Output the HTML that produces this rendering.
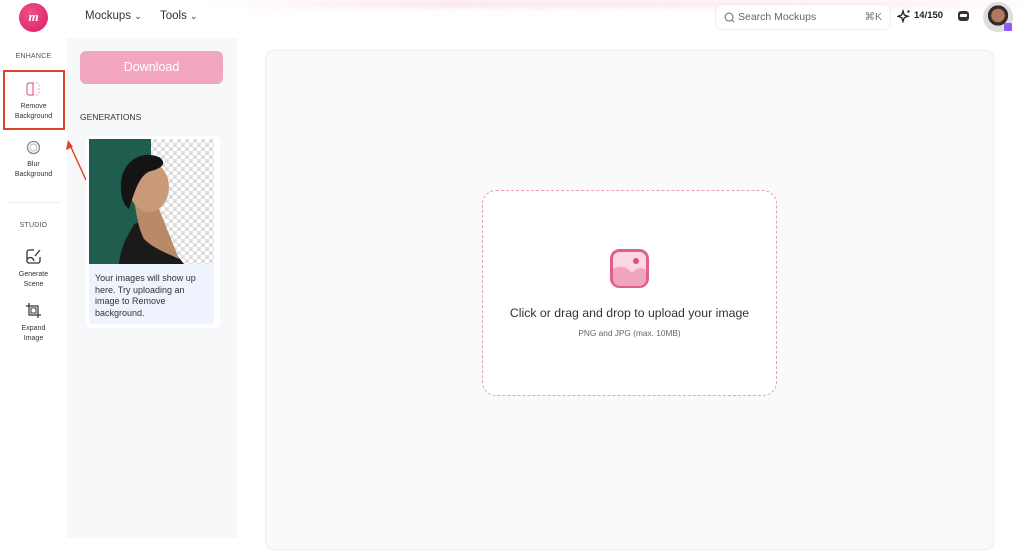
<!DOCTYPE html>
<html><head><meta charset="utf-8"><style>
*{box-sizing:border-box;margin:0;padding:0}
body{width:1024px;height:538px;overflow:hidden;background:#fff;font-family:"Liberation Sans",sans-serif;color:#333;position:relative}
.top{position:absolute;left:0;top:0;width:1024px;height:38px;background:#fff}
.top:before{content:"";position:absolute;left:200px;right:0;top:0;height:8px;background:linear-gradient(90deg,rgba(255,220,230,.0),rgba(253,215,228,.7) 30%,rgba(253,225,233,.6) 80%,rgba(255,240,244,.3));filter:blur(3px)}
.logo{position:absolute;left:19px;top:3px;width:29px;height:29px;border-radius:50%;background:radial-gradient(circle at 40% 35%,#f0508a,#d81e62);color:#fff;font:italic bold 13px "Liberation Serif",serif;text-align:center;line-height:28px}
.nav{position:absolute;top:10px;font-size:11.5px;color:#333}
.side{position:absolute;left:0;top:38px;width:67px;height:500px;background:#fff}
.panel{position:absolute;left:67px;top:38px;width:170px;height:500px;background:#f7f8fa}
.lab{position:absolute;font-size:7px;color:#555;text-align:center;width:67px;left:0;letter-spacing:.2px}
.item{position:absolute;left:0;width:67px;text-align:center;font-size:7px;line-height:10px;color:#333}
.card{position:absolute;left:265px;top:50px;width:729px;height:500px;background:#f9fafb;border:1px solid #eceef1;border-radius:8px}
.drop{position:absolute;left:482px;top:190px;width:295px;height:206px;background:#fff;border:1px dashed #e6a0b8;border-radius:14px}
</style></head><body>
<div class="top"></div>
<div class="logo">m</div>
<div class="nav" style="left:85px">Mockups <span style="font-size:9px">&#8964;</span></div>
<div class="nav" style="left:160px">Tools <span style="font-size:9px">&#8964;</span></div>
<div style="position:absolute;left:715px;top:4px;width:176px;height:26px;border:1px solid #eee;border-radius:7px;background:#fff;font-size:10.5px;color:#666">
<svg style="position:absolute;left:8px;top:7px" width="11" height="11" viewBox="0 0 12 12"><circle cx="5.5" cy="5.5" r="4.3" fill="none" stroke="#777" stroke-width="1.2"/><path d="M8.7 8.7L11 11" stroke="#777" stroke-width="1.2"/></svg>
<span style="position:absolute;left:22px;top:6px">Search Mockups</span>
<span style="position:absolute;right:8px;top:6px;color:#777">⌘K</span></div>
<svg style="position:absolute;left:897px;top:9px" width="14" height="14" viewBox="0 0 14 14"><path d="M6 2L7.3 6 11 7.3 7.3 8.6 6 12.5 4.7 8.6 1 7.3 4.7 6Z" fill="none" stroke="#222" stroke-width="1.3"/><circle cx="11.5" cy="2.5" r="1.2" fill="#222"/></svg>
<div style="position:absolute;left:914px;top:10px;font-size:9.5px;font-weight:bold;color:#222">14/150</div>
<div style="position:absolute;left:958px;top:11px;width:11px;height:10px;border-radius:3px;background:#333"><div style="margin:3px 2px;height:3px;background:#fff;border-radius:1px"></div></div>
<div style="position:absolute;left:983px;top:2px;width:30px;height:30px;border-radius:50%;background:radial-gradient(circle at 50% 45%,#b07a60 0 30%,#3a2a25 31% 45%,#ddd 46%)"></div>
<div style="position:absolute;left:1004px;top:23px;width:8px;height:8px;background:#8b5cf6;border-radius:1px"></div>

<div class="side"></div>
<div class="panel"></div>
<div class="lab" style="top:53px">ENHANCE</div>
<div style="position:absolute;left:3px;top:70px;width:62px;height:60px;border:2px solid #e0432d"></div>
<svg style="position:absolute;left:26px;top:82px" width="15" height="14" viewBox="0 0 15 14"><rect x="1" y="1" width="12" height="12" rx="2" fill="none" stroke="#e6a0b8" stroke-dasharray="2 1.5"/><path d="M3 1H7V13H3A2 2 0 0 1 1 11V3A2 2 0 0 1 3 1Z" fill="#fff" stroke="#e3688f" stroke-width="1.2"/></svg>
<div class="item" style="top:102px">Remove<br>Background</div>
<svg style="position:absolute;left:26px;top:140px" width="15" height="15" viewBox="0 0 15 15"><circle cx="7.5" cy="7.5" r="6" fill="none" stroke="#888" stroke-width="1.3"/><circle cx="7.5" cy="7.5" r="3.5" fill="none" stroke="#bbb"/></svg>
<div class="item" style="top:160px">Blur<br>Background</div>
<div style="position:absolute;left:8px;top:202px;width:52px;height:1px;background:#eee"></div>
<div class="lab" style="top:222px">STUDIO</div>
<svg style="position:absolute;left:25px;top:248px" width="17" height="17" viewBox="0 0 17 17"><path d="M9 2H4A2 2 0 0 0 2 4V13A2 2 0 0 0 4 15H13A2 2 0 0 0 15 13V9" fill="none" stroke="#333" stroke-width="1.3"/><path d="M2 11C6 8 8 10 9 13M10 8L15 2" fill="none" stroke="#333" stroke-width="1.3"/></svg>
<div class="item" style="top:270px">Generate<br>Scene</div>
<svg style="position:absolute;left:26px;top:303px" width="15" height="15" viewBox="0 0 15 15"><path d="M3 0V12H15M0 3H12V15" fill="none" stroke="#333" stroke-width="1.2"/><rect x="5" y="5" width="5" height="5" fill="none" stroke="#333"/></svg>
<div class="item" style="top:324px">Expand<br>Image</div>
<svg style="position:absolute;left:60px;top:135px" width="30" height="50" viewBox="0 0 30 50"><path d="M26 45L10 10" stroke="#e0432d" stroke-width="1.5"/><path d="M8 5L6 15 13 12Z" fill="#e0432d"/></svg>

<div style="position:absolute;left:80px;top:51px;width:143px;height:33px;border-radius:6px;background:#f3a6c2;color:#fff;font-size:12.5px;text-align:center;line-height:33px">Download</div>
<div style="position:absolute;left:80px;top:112px;font-size:8.5px;color:#333">GENERATIONS</div>
<div style="position:absolute;left:86px;top:136px;width:134px;height:192px;background:#fff;border-radius:6px"></div>
<svg style="position:absolute;left:89px;top:139px" width="125" height="125" viewBox="0 0 125 125">
<defs><pattern id="ck" width="8" height="8" patternUnits="userSpaceOnUse"><rect width="8" height="8" fill="#fff"/><rect width="4" height="4" fill="#ddd"/><rect x="4" y="4" width="4" height="4" fill="#ddd"/></pattern></defs>
<rect width="125" height="125" fill="url(#ck)"/><rect width="62" height="125" fill="#1f5d4f"/>
<path d="M30 125C32 105 40 95 45 85L60 80 75 100 95 125Z" fill="#1a1a1a"/>
<path d="M45 60C48 80 50 90 55 100 65 110 80 115 90 120L70 70Z" fill="#b88a68"/>
<ellipse cx="60" cy="48" rx="20" ry="25" fill="#c99a78"/>
<path d="M32 50C30 25 50 10 70 18 80 25 70 30 62 32 50 35 45 55 40 70 34 65 32 58 32 50Z" fill="#141414"/>
</svg>
<div style="position:absolute;left:89px;top:264px;width:125px;height:60px;background:#eef3fd;border-radius:0 0 4px 4px;font-size:9px;line-height:11.5px;color:#333;padding:9px 12px 0 6px">Your images will show up here. Try uploading an image to Remove background.</div>

<div class="card"></div>
<div class="drop"></div>
<svg style="position:absolute;left:610px;top:249px" width="39" height="39" viewBox="0 0 39 39"><rect x="1.5" y="1.5" width="36" height="36" rx="8" fill="#fbd7e3" stroke="#e0608c" stroke-width="3"/><path d="M3 20C10 16 16 17 22 24 27 18 32 18 36 21V30A7 7 0 0 1 29 37H10A7 7 0 0 1 3 30Z" fill="#f1a4bf"/><circle cx="26" cy="12" r="3" fill="#d94f80"/></svg>
<div style="position:absolute;left:482px;top:306px;width:295px;text-align:center;font-size:12.3px;color:#333">Click or drag and drop to upload your image</div>
<div style="position:absolute;left:482px;top:328px;width:295px;text-align:center;font-size:8.3px;color:#666">PNG and JPG (max. 10MB)</div>
</body></html>
